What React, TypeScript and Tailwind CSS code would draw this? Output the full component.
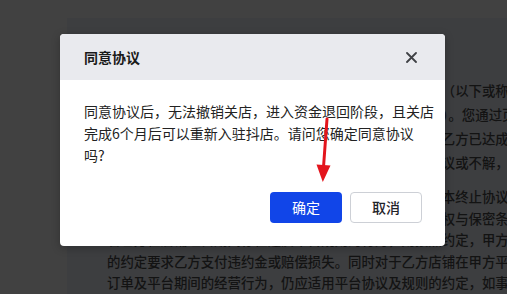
import React from "react";

const bgLines1 = [
  "本协议由抖店平台经营者与在抖店平台上开设店铺的商家（以下或称“乙方”）共同缔结",
  "甲乙双方就乙方店铺关闭及清退相关事项签订本终止协议）。您通过页面勾选确认即表示",
  "您已充分阅读并理解本协议全部条款内容，确认与甲方及乙方已达成一致意见并同意签署",
  "如您对本协议条款内容存在疑问，请勿签署本协议；有异议或不解，请联系平台客服",
];

const bgLines2 = [
  "乙方店铺完成关店后，甲乙双方之间的平台服务协议随同本终止协议生效而终止履行",
  "但本协议中关于争议解决、违约责任等条款，以及知识产权与保密条款继续有效",
  "若乙方在店铺经营期间存在违反平台规则的行为，则按照约定，甲方有权依据平台协议",
  "的约定要求乙方支付违约金或赔偿损失。同时对于乙方店铺在甲方平台产生的全部交易",
  "订单及平台期间的经营行为，仍应适用平台协议及规则的约定，如事后发现违规行为",
];

export default function App() {
  return (
    <div
      className="relative h-[294px] w-[507px] overflow-hidden bg-[#414141]"
      style={{ fontFamily: '"Noto Sans CJK SC", "Noto Sans", sans-serif' }}
    >
      {/* dimmed page behind the modal */}
      <div className="h-full pl-[67px] pt-[18px]">
        <div className="h-full bg-[#3d3e40] pl-[40px] pt-[60px] text-[13.4px] font-medium text-[#131313]">
          <div className="whitespace-nowrap leading-[24px]">
            {bgLines1.map((l) => (
              <div key={l}>{l}</div>
            ))}
          </div>
          <div className="mt-[12px] whitespace-nowrap leading-[21.5px]">
            {bgLines2.map((l) => (
              <div key={l}>{l}</div>
            ))}
          </div>
        </div>
      </div>

      {/* modal */}
      <div className="absolute left-[60px] top-[34px] w-[385px] overflow-hidden rounded-[4px] bg-white shadow-[0_2px_8px_rgba(0,0,0,0.25)]">
        <div className="flex h-[46px] items-center justify-between bg-[#e9eaee] pl-6 pr-[28px]">
          <span className="text-[14px] font-semibold text-[#1a1a1a]">同意协议</span>
          <svg width="11" height="11" viewBox="0 0 11 11" fill="none">
            <path d="M1 1L10 10M10 1L1 10" stroke="#3f4145" strokeWidth="1.8" strokeLinecap="round" />
          </svg>
        </div>
        <p className="whitespace-nowrap pl-6 pt-5 text-[14px] leading-[22px] text-[#222222]">
          同意协议后，无法撤销关店，进入资金退回阶段，且关店
          <br />
          完成6个月后可以重新入驻抖店。请问您确定同意协议
          <br />
          吗?
        </p>
        <div className="mt-[26px] flex justify-end gap-2 pb-[23px] pr-[23px]">
          <button className="h-[31px] w-[72px] rounded-[4px] bg-[#1145e8] text-[14px] text-white">
            确定
          </button>
          <button className="h-[31px] w-[72px] rounded-[4px] border border-[#cdd0d6] bg-white text-[14px] font-medium text-[#1f2329]">
            取消
          </button>
        </div>
      </div>

      {/* red annotation arrow */}
      <svg className="absolute left-0 top-0" width="507" height="294" viewBox="0 0 507 294" fill="none">
        <path d="M327 119L323.5 167" stroke="#e3141c" strokeWidth="3" strokeLinecap="round" />
        <path d="M316.5 164.5L330.5 165.5L322.8 182Z" fill="#e3141c" />
      </svg>
    </div>
  );
}
